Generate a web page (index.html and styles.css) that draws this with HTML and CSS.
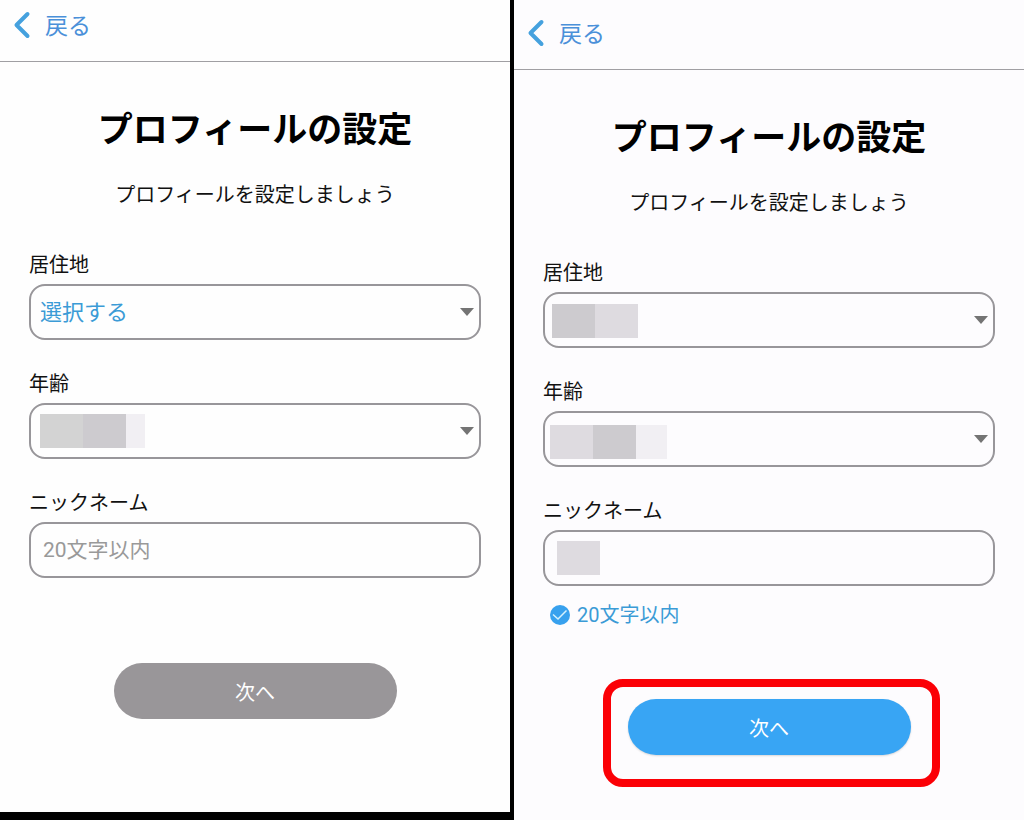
FILE: index.html
```html
<!DOCTYPE html>
<html lang="ja">
<head>
    <meta charset="UTF-8">
    <meta name="viewport" content="width=device-width, initial-scale=1.0">
    <title>プロフィールの設定</title>
    <link rel="stylesheet" href="styles.css">
</head>
<body>
    <div class="screens">
        <div class="screen">
            <header class="nav">
                <a class="back" href="#">
                    <svg class="back-icon" viewBox="0 0 20 28" aria-hidden="true"><path d="M15.500 3 L4.500 14 L15.500 25"/></svg>
                    戻る
                </a>
            </header>
            <main class="content">
                <h1 class="title">プロフィールの設定</h1>
                <p class="lead">プロフィールを設定しましょう</p>
                <form>
                    <div class="form-group">
                        <label for="area1">居住地</label>
                        <div class="field select-field">
                            <select class="form-control" id="area1">
                                <option>選択する</option>
                            </select>
                        </div>
                    </div>
                    <div class="form-group">
                        <label for="age1">年齢</label>
                        <div class="field select-field">
                            <select class="form-control" id="age1">
                                <option></option>
                            </select>
                            <div class="mask mask-age1"><i class="tone-2"></i><i class="tone-1"></i><i class="tone-4 short"></i></div>
                        </div>
                    </div>
                    <div class="form-group">
                        <label for="nickname1">ニックネーム</label>
                        <div class="field">
                            <input class="form-control" type="text" id="nickname1" placeholder="20文字以内">
                        </div>
                    </div>
                    <div class="actions">
                        <button class="btn" type="button" disabled>次へ</button>
                    </div>
                </form>
            </main>
        </div>

        <div class="screen screen-filled">
            <header class="nav">
                <a class="back" href="#">
                    <svg class="back-icon" viewBox="0 0 20 28" aria-hidden="true"><path d="M15.500 3 L4.500 14 L15.500 25"/></svg>
                    戻る
                </a>
            </header>
            <main class="content">
                <h1 class="title">プロフィールの設定</h1>
                <p class="lead">プロフィールを設定しましょう</p>
                <form>
                    <div class="form-group">
                        <label for="area2">居住地</label>
                        <div class="field select-field">
                            <select class="form-control" id="area2">
                                <option></option>
                            </select>
                            <div class="mask mask-area2"><i class="tone-1"></i><i class="tone-3"></i></div>
                        </div>
                    </div>
                    <div class="form-group">
                        <label for="age2">年齢</label>
                        <div class="field select-field">
                            <select class="form-control" id="age2">
                                <option></option>
                            </select>
                            <div class="mask mask-age2"><i class="tone-3"></i><i class="tone-1"></i><i class="tone-4"></i></div>
                        </div>
                    </div>
                    <div class="form-group">
                        <label for="nickname2">ニックネーム</label>
                        <div class="field">
                            <input class="form-control" type="text" id="nickname2">
                            <div class="mask mask-name2"><i class="tone-3"></i></div>
                        </div>
                        <p class="hint">
                            <svg class="hint-icon" viewBox="0 0 20 20" aria-hidden="true"><circle cx="10" cy="10" r="10"/><path d="M3 9.500 L8 14 L16.500 5.500"/></svg>
                            20文字以内
                        </p>
                    </div>
                    <div class="actions">
                        <div class="highlight">
                            <button class="btn" type="button">次へ</button>
                        </div>
                    </div>
                </form>
            </main>
        </div>
    </div>
</body>
</html>
```
FILE: styles.css
```css
* {
	box-sizing: border-box;
}

body {
	margin: 0;
	background-color: #000;
	color: #111;
	font-family: Roboto, "Noto Sans CJK JP", sans-serif;
	font-size: 20px;
	line-height: 28px;
}

.screens {
	display: grid;
	grid-template-columns: 1fr 1fr;
	gap: 4px;
	min-height: 100vh;
}

.screen {
	margin-bottom: 8px;
	background-color: #fefefe;
}

.screen-filled {
	margin-bottom: 0;
	padding-top: 8px;
	background-color: #fdfcfe;
}

.nav {
	padding: 0 12px 7px;
	border-bottom: 1px solid #a09fa3;
}

.back {
	display: inline-flex;
	align-items: center;
	gap: 13px;
	height: 54px;
	color: #4a90d9;
	font-size: 23px;
	text-decoration: none;
	vertical-align: top;
}

.back-icon {
	width: 20px;
	height: 28px;
	margin-bottom: 4px;
	fill: none;
	stroke: #45a1de;
	stroke-width: 4;
	stroke-linecap: round;
	stroke-linejoin: round;
}

.content {
	padding: 44px 29px 24px;
}

.title {
	margin: 0 0 25px;
	color: #000;
	font-size: 35px;
	font-weight: bold;
	line-height: 50px;
	text-align: center;
}

.lead {
	margin: 0 0 42px;
	text-align: center;
}

.form-group {
	margin-bottom: 30px;
}

.form-group label {
	display: block;
	margin-bottom: 5px;
}

.field {
	position: relative;
}

.form-control {
	display: block;
	width: 100%;
	height: 56px;
	padding: 0 12px;
	border: 2px solid #98969a;
	border-radius: 16px;
	background-color: transparent;
	color: #111;
	font-family: inherit;
	font-size: 21px;
	appearance: none;
}

select.form-control {
	padding: 0 9px;
	color: #3b9bd6;
	font-size: 22px;
}

.form-control::placeholder {
	color: #999;
	opacity: 1;
}

.select-field::after {
	content: "";
	position: absolute;
	top: 24px;
	right: 7px;
	border: 7px solid transparent;
	border-top: 8px solid #747474;
	border-bottom: 0;
	pointer-events: none;
}

/* blurred-out values */
.mask {
	position: absolute;
	display: flex;
	height: 34px;
	pointer-events: none;
}

.mask i {
	width: 43px;
}

.mask .tone-1 {
	background-color: #cdcbcf;
}

.mask .tone-2 {
	background-color: #d3d3d3;
}

.mask .tone-3 {
	background-color: #dedbe0;
}

.mask .tone-4 {
	width: 31px;
	background-color: #f1eff3;
}

.mask .short {
	width: 19px;
}

.mask-age1 {
	top: 11px;
	left: 11px;
}

.mask-area2 {
	top: 12px;
	left: 9px;
}

.mask-age2 {
	top: 14px;
	left: 7px;
}

.mask-name2 {
	top: 11px;
	left: 14px;
}

.hint {
	display: flex;
	align-items: center;
	gap: 7px;
	margin: 15px 0 0;
	padding-left: 7px;
	color: #3b9bd6;
}

.hint-icon {
	width: 20px;
	height: 20px;
	fill: #38a1ee;
}

.hint-icon path {
	fill: none;
	stroke: #d5f1fd;
	stroke-width: 1.5;
}

.actions {
	display: flex;
	justify-content: center;
	padding-top: 55px;
}

.screen-filled .actions {
	padding-top: 40px;
}

.btn {
	display: block;
	width: 283px;
	height: 56px;
	border: 0;
	border-radius: 28px;
	background-color: #38a5f4;
	box-shadow: 0 1px 2px rgba(0, 0, 0, 0.15);
	color: #fff;
	font-family: inherit;
	font-size: 20px;
}

.btn:disabled {
	background-color: #999699;
	box-shadow: none;
	color: #fff;
}

.highlight {
	position: relative;
}

/* red frame around the button */
.highlight::after {
	content: "";
	position: absolute;
	inset: -20px -29px -32px -25px;
	border: 8px solid #fb0006;
	border-radius: 20px;
	pointer-events: none;
}
```
